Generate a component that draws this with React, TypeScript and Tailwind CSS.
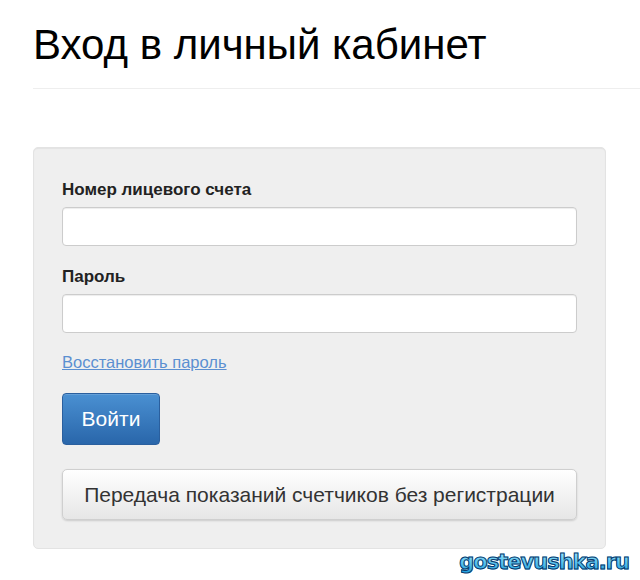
export default function App() {
  return (
    <div className="relative h-[580px] w-[640px] overflow-hidden bg-white font-['Liberation_Sans',Arial,sans-serif] text-[#111]">
      <div className="pl-[33px] pt-[21px]">
        <h1 className="text-[42px] leading-[48px] font-normal text-black">Вход в личный кабинет</h1>
        <div className="mt-[19px] h-px bg-[#eeeeee]" />
        <div className="mt-[58px] w-[573px] rounded-[5px] border border-[#e3e3e3] bg-[#efefef] px-[28px] pt-[31px] pb-[28px] shadow-[inset_0_1px_1px_rgba(0,0,0,0.05)]">
          <label className="block text-[17px] leading-[21px] font-bold text-[#222]">Номер лицевого счета</label>
          <input className="mt-[7px] block h-[39px] w-[515px] rounded-[4px] border border-[#cccccc] bg-white shadow-[inset_0_1px_1px_rgba(0,0,0,0.075)] outline-none" />
          <label className="mt-[20px] block text-[17px] leading-[21px] font-bold text-[#222]">Пароль</label>
          <input
            type="password"
            className="mt-[7px] block h-[39px] w-[515px] rounded-[4px] border border-[#cccccc] bg-white shadow-[inset_0_1px_1px_rgba(0,0,0,0.075)] outline-none"
          />
          <a href="#" className="mt-[19px] block w-fit text-[16.5px] leading-[21px] text-[#5b8fd1] underline">
            Восстановить пароль
          </a>
          <button className="mt-[20px] block h-[52px] w-[98px] rounded-[4px] border border-[#2a5f9e] bg-[linear-gradient(#4a90d2,#2966aa)] text-[21px] text-white shadow-[inset_0_1px_0_rgba(255,255,255,0.15)]">
            Войти
          </button>
          <button className="mt-[24px] block h-[51px] w-[515px] rounded-[5px] border border-[#cfcfcf] bg-[linear-gradient(#ffffff,#e6e6e6)] text-[21px] text-[#333] shadow-[0_1px_2px_rgba(0,0,0,0.15)]">
            Передача показаний счетчиков без регистрации
          </button>
        </div>
      </div>
      <div className="absolute right-[11px] bottom-[7px] bg-[linear-gradient(#9be8ff,#1e9fdc)] bg-clip-text font-['DejaVu_Sans',sans-serif] text-[21px] leading-[22px] font-bold tracking-[-1px] text-transparent [-webkit-text-stroke:1px_#0b3a6e]">
        gostevushka.ru
      </div>
    </div>
  );
}
